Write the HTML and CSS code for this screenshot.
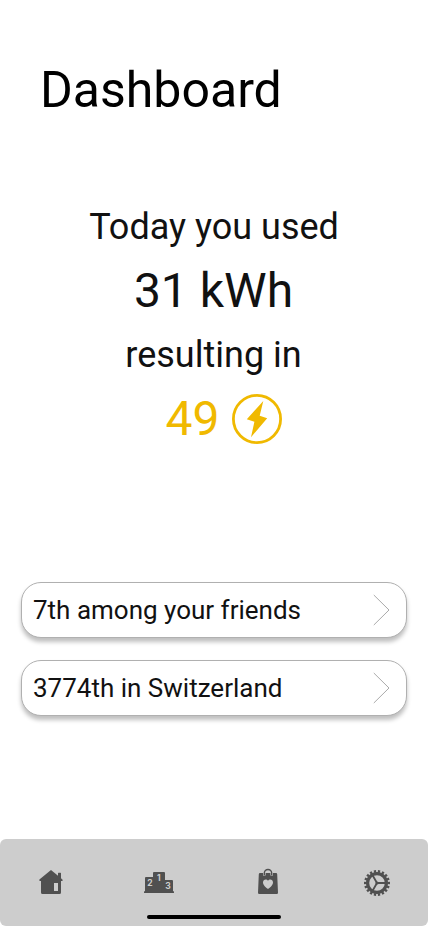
FILE: index.html
```html
<!DOCTYPE html>
<html lang="en">
<head>
<meta charset="utf-8">
<meta name="viewport" content="width=device-width, initial-scale=1">
<title>Dashboard</title>
<link rel="stylesheet" href="styles.css">
</head>
<body>
<div class="screen">
  <h1 class="title">Dashboard</h1>
  <main class="content">
    <section class="summary">
      <p class="line">Today you used</p>
      <p class="line big usage">31 kWh</p>
      <p class="line resulting">resulting in</p>
      <p class="line big points"><span>49</span>
        <svg width="50" height="50" viewBox="0 0 50 50"><circle cx="25" cy="25" r="23.6" fill="none" stroke="currentColor" stroke-width="2.8"/><path d="M31.3 7 14.8 25.3l7.6 2.5L19 43.2 35.2 24.2l-7.5-2.5z" fill="currentColor"/></svg>
      </p>
    </section>
    <section class="ranks">
      <a class="card"><span>7th among your friends</span><svg class="chevron" width="17" height="32" viewBox="0 0 17 32"><path d="M.8 1 16 16 .8 31"/></svg></a>
      <a class="card"><span>3774th in Switzerland</span><svg class="chevron" width="17" height="32" viewBox="0 0 17 32"><path d="M.8 1 16 16 .8 31"/></svg></a>
    </section>
  </main>
  <nav class="tabs">
    <div class="icons">
      <svg width="30" height="30" viewBox="0 0 30 30"><path fill-rule="evenodd" d="M15 2.1 22 7.8V5.2q0-.5.5-.5h2q.5 0 .5.5v5l1.6 1.5q.5 1.3-.7 1.3H25v11.5q0 1.5-1.5 1.5h-17Q5 26 5 24.5V13H4q-1.2 0-.6-1.4zM18 15v8h4v-8z"/></svg>
      <svg class="podium" width="30" height="30" viewBox="0 0 30 30"><path d="M1 10q0-1 1-1h7V5q0-1 1-1h10q1 0 1 1v7h7q1 0 1 1v10q1 0 1 1.4v.6H0v-.6Q0 23 1 23z"/><g class="places"><text x="6" y="18">2</text><text x="14.8" y="13">1</text><text x="24" y="21">3</text></g></svg>
      <svg width="30" height="30" viewBox="0 0 30 30"><path d="M11.3 7.5V5.2a3.7 3.7 0 0 1 7.4 0v2.3" fill="none" stroke="#505050" stroke-width="1.4"/><path fill-rule="evenodd" d="M7 5h3v1.7a1.3 1.3 0 0 0 2.6 0V5h4.8v1.7a1.3 1.3 0 0 0 2.6 0V5h3q1.1 0 1.2 1.2L25 24.8q0 1.2-1.2 1.2H6.2Q5 26 5 24.8L5.8 6.2Q5.9 5 7 5zM15 21c-1.5-1.2-5-3.8-5-6.6 0-3.2 3.6-4 5-1.6 1.4-2.4 5-1.6 5 1.6 0 2.8-3.5 5.4-5 6.6z"/></svg>
      <svg width="30" height="30" viewBox="0 0 30 30"><g fill="none" stroke="#505050"><circle cx="15" cy="15" r="9.4" stroke-width="3.2"/><circle cx="15" cy="15" r="11.7" stroke-width="2.6" pathLength="36" stroke-dasharray="1.1 .9" stroke-dashoffset=".55"/><path stroke-width="1.8" d="M15 15h9M15 15l-4.6-8M15 15l-4.6 8"/></g><circle cx="15" cy="15" r="1.6"/></svg>
    </div>
    <div class="home-indicator"></div>
  </nav>
</div>
</body>
</html>
```
FILE: styles.css
```css
* { box-sizing: border-box; }
body { margin: 0; background: #fff; color: #111; font-family: Roboto, sans-serif; }
.screen { width: 428px; height: 926px; display: flex; flex-direction: column; overflow: hidden; }
.title { margin: 0; padding: 60px 0 0 40px; font-size: 50px; line-height: 60px; font-weight: 400; color: #000; }
.content { flex: 1; }
.summary { padding-top: 75px; text-align: center; }
.line { margin: 0; height: 64px; line-height: 64px; font-size: 36px; }
.usage { padding-right: 1px; }
.resulting { padding-right: 1px; }
.big { font-size: 48px; }
.points { display: flex; align-items: center; justify-content: center; gap: 13px; padding-left: 20px; color: #f0b900; }
.ranks { display: flex; flex-direction: column; gap: 22px; padding: 131px 21px 0; }
.card { display: flex; align-items: center; justify-content: space-between; height: 56px; padding: 0 16px 0 11px; border: 1px solid #b0b0b0; border-radius: 20px; background: #fff; box-shadow: 0 4px 4px rgba(0, 0, 0, .25); font-size: 26px; }
.chevron { fill: none; stroke: #aaa; stroke-width: 1; }
.tabs { display: flex; flex-direction: column; align-items: center; justify-content: space-between; height: 87px; padding: 29px 36px 7px; background: #cdcdcd; border-radius: 6px; }
.icons { display: flex; justify-content: space-between; width: 100%; fill: #505050; }
.podium { margin: 0 1px 0 -1px; }
.places { fill: #cdcdcd; font-size: 8.5px; font-weight: 700; font-family: Inter, sans-serif; text-anchor: middle; }
.home-indicator { width: 134px; height: 4px; border-radius: 2px; background: #000; }
```
